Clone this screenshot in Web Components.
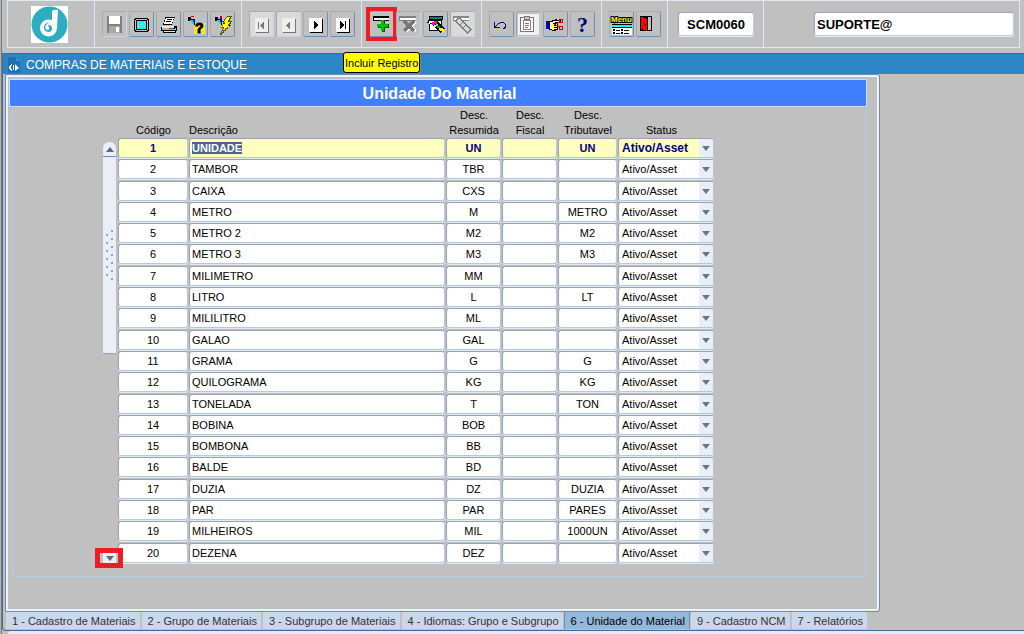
<!DOCTYPE html>
<html lang="pt-BR">
<head>
<meta charset="utf-8">
<title>Compras de Materiais e Estoque</title>
<style>
  html, body { margin: 0; min-height: 100%; }
  body { background: #c0c0c0; color: #000; font: 11px/15px "Liberation Sans", Arial, sans-serif; }
</style>
</head>
<body>
<erp-app></erp-app>

<template id="icons">
  <svg data-icon="save" viewBox="0 0 23 23"><path fill="#808080" d="M3 3h15l1 1v16H4l-1-1z"/><path fill="#fff" d="M6 3h11v8H6z"/><path fill="#a8a8a8" d="M6 13h11v7H6z"/><path fill="#fff" d="M13 14h3v5h-3z"/><path fill="#c0c0c0" d="M3 3h1v16H3z"/></svg>
  <svg data-icon="screen" viewBox="0 0 23 23"><path fill="#000" d="M5 5h13v1h1v12h-1v1H5v-1H4V6h1z"/><path fill="#c0c0c0" d="M6 6h11v1h1v10h-1v1H6v-1H5V7h1z"/><path fill="#000" d="M6 7h11v10H6z"/><path fill="#0ff" d="M7 8h9v8H7z"/><path fill="#fff" d="M8 9h1v1H8zM11 9h1v1h-1zM14 9h1v1h-1zM9 11h1v1H9zM12 11h1v1h-1zM8 13h1v1H8zM11 13h1v1h-1zM14 13h1v1h-1z"/></svg>
  <svg data-icon="print" viewBox="0 0 23 23"><path fill="#000" d="M8 4h10v1h-1v2h-1v3h-1v2H6v-2h1V7h1z"/><path fill="#fff" d="M9 5h8l-2 6H7z"/><path fill="#000" d="M10 6h5v1h-5zM9 8h5v1H9z"/><path fill="#000" d="M5 13h15v5H4v-4h1z"/><path fill="#e8e8e8" d="M5 13h12v2H5z"/><path fill="#b0b0b0" d="M5 15h14v2H5z"/><path fill="#000" d="M6 18h13v2H6z"/><path fill="#e8e8e8" d="M7 18h11v1H7z"/><path fill="#e00" d="M12 15h2v1h-2z"/><path fill="#0b0" d="M14 15h2v1h-2z"/><path fill="#00d" d="M16 15h2v1h-2z"/></svg>
  <svg data-icon="ask" viewBox="0 0 23 23"><path fill="#fff200" d="M10 10h11v11H10z"/><path fill="#c0c0c0" d="M10 10h2v1h-2zM10 13h1v1h-1zM20 13h1v1h-1zM11 17h1v1h-1zM19 18h1v1h-1zM11 20h1v1h-1z"/><path fill="#000" d="M4 4h3v2h4v6h-1v-2H8V9H6V8H4z"/><path fill="#d00" d="M7 3h3v1H7z"/><path fill="#00f" d="M9 6h2v3H9z"/><path fill="#00e0e0" d="M6 7h3v2h1v2H8V9H6z"/><text x="11" y="20" font-family="Liberation Sans" font-size="14" font-weight="700" fill="#000" stroke="#000" stroke-width="1">?</text></svg>
  <svg data-icon="run" viewBox="0 0 23 23"><path fill="#000" d="M4 4h3v2h4v6h-1v-2H8V9H6V8H4z"/><path fill="#d00" d="M9 3h2v2H9z"/><path fill="#00f" d="M9 5h2v4H9z"/><path fill="#00e0e0" d="M6 7h3v2h1v2H8V9H6z"/><path fill="#555500" d="M16 3h5v1h-1v2h-1v2h2v1h-1v2h-1v1h1v1h-1v1h-2v2h-2v2h-2v2h-2v2H9v-2h1v-2h1v-2h1v-1h-2v-1h1v-2h1V9h-1V8h2V6h1V5h1z"/><path fill="#ff0" d="M16 4h3v1h-1v2h-1v2h2v1h-1v1h-1v2h1v1h-2v1h-2v2h-2v2h-1v-1h1v-2h1v-2h-2v-1h1v-2h2V9h-1V8h1V6h1z"/></svg>
  <svg data-icon="first" viewBox="0 0 23 23"><path fill="#777" d="M6 6h13v14H6z"/><path fill="#eee" d="M5 5h13v14H5z"/><path fill="#777" d="M8 9h1v7H8zM14 9v7h-1v-1h-1v-1h-1v-1h-1v-1h1v-1h1v-1h1V9z"/></svg>
  <svg data-icon="prev" viewBox="0 0 23 23"><path fill="#777" d="M6 6h13v14H6z"/><path fill="#eee" d="M5 5h13v14H5z"/><path fill="#777" d="M13 9v7h-1v-1h-1v-1h-1v-1H9v-1h1v-1h1v-1h1V9z"/></svg>
  <svg data-icon="next" viewBox="0 0 23 23"><path fill="#000" d="M6 6h13v14H6z"/><path fill="#fff" d="M5 5h13v14H5z"/><path fill="#000" d="M10 8h1v1h1v1h1v1h1v2h-1v1h-1v1h-1v1h-1z"/></svg>
  <svg data-icon="last" viewBox="0 0 23 23"><path fill="#000" d="M6 6h13v14H6z"/><path fill="#fff" d="M5 5h13v14H5z"/><path fill="#000" d="M9 8h1v1h1v1h1v1h1v2h-1v1h-1v1h-1v1H9zM14 8h1v8h-1z"/></svg>
  <svg data-icon="add" viewBox="0 0 23 23"><path fill="#000" d="M3 3h16v5H3z"/><path fill="#fff" d="M4 5h15v2H4z"/><path fill="#005800" d="M11 7h4v4h4v4h-4v4h-3v-4H8v-3h3z"/><path fill="#00c000" d="M11 7h3v4h4v3h-4v4h-3v-4H7v-3h4z"/></svg>
  <svg data-icon="delete" viewBox="0 0 23 23"><path fill="#808080" d="M2 3h17v5H2z"/><path fill="#fff" d="M3 5h16v2H3z"/><path stroke="#fff" stroke-width="2" d="M9 9l10 9M19 9L9 19"/><path stroke="#777" stroke-width="3" d="M7 8l10 10M17 8L7 18"/></svg>
  <svg data-icon="query" viewBox="0 0 23 23"><path fill="#000" d="M5 3h14v4h-1v11H5v-8H3V9h1V7h1z"/><path fill="#008080" d="M6 4h12v2H6z"/><path fill="#fff" d="M5 8h12v9H6v-6H5z"/><path fill="#000" d="M6 10h3v1H6z"/><path stroke="#000" stroke-width="6" d="M10 9l9 9"/><path fill="#f0f" d="M8 9h3v3H8z"/><path fill="#f22" d="M10 8h3v3h-3z"/><path fill="#ff0" d="M10 12h2v2h-2z"/><path fill="#0ff" d="M12 11h2v2h-2z"/><path fill="#0a0" d="M13 13h3v2h-3z"/><path fill="#ff0" d="M15 15h4v1h1v3h-2v-1h-2v-1h-1z"/></svg>
  <svg data-icon="cancelQuery" viewBox="0 0 23 23"><path fill="#888" d="M2 3h16v5H2z"/><path fill="#fff" d="M3 5h15v2H3z"/><path stroke="#808080" stroke-width="6" d="M6 6l13 13"/><path stroke="#d8d8d8" stroke-width="3" d="M7 7l11 11"/><path stroke="#808080" d="M9 12l3-3M12 15l3-3"/></svg>
  <svg data-icon="undo" viewBox="0 0 23 23"><path fill="#000080" d="M4 9h1v5h5v1H4zM5 13h1v-1h1v-1h1v1H7v1H6v1H5zM8 10h2V9h4v1h1v1h1v4h-1v1h-2v-1h1v-1h1v-3h-1v-1h-4v1H8z"/></svg>
  <svg data-icon="clipboard" viewBox="0 0 23 23"><path fill="#f2f2f2" d="M1 1h21v21H1z"/><path fill="#fff" stroke="#777" d="M3.500 4.500h13v14h-13z"/><path fill="#ccc" stroke="#777" d="M7.500 3.500h5v3h-5z"/><path fill="#fff" stroke="#888" d="M6.500 7.500h7v9h-7z"/><path fill="#777" d="M8 10h4v1H8zM8 12h4v1H8zM8 14h3v1H8z"/></svg>
  <svg data-icon="cut" viewBox="0 0 23 23"><path fill="#00d" d="M2 8h3v8H2z"/><path fill="#000" d="M5 8h3V7h3V6h2v1h4v2h-3v8h-2v1H8v-1H5z"/><path fill="#ffff80" d="M6 9h3V8h7v1h-5v1H9v1h4v1h-3v1h3v1h-3v1h3v1h-3v1H8v-1H6z"/><path stroke="#d00" d="M15.500 6.500h3v3h-3zM15.500 13.500h3v3h-3zM10 11l6 3M10 12l6-3"/></svg>
  <svg data-icon="help" viewBox="0 0 23 23"><text x="6" y="19" font-family="Liberation Serif" font-size="22" font-weight="700" fill="#000080">?</text></svg>
  <svg data-icon="menu" viewBox="0 0 23 23"><path fill="#fff" d="M2 14h20v8H2z"/><path fill="#000" d="M2 11h20v4H2zM3 16h2v2H3zM6 17h4v1H6zM11 16h2v2h-2zM14 17h5v1h-5zM3 19h2v2H3zM6 20h4v1H6zM11 19h2v2h-2zM14 20h5v1h-5z"/><path fill="#0ff" d="M2 12h20v2H2z"/><text x="1" y="9" font-family="Liberation Sans" font-size="8" font-weight="700" fill="#ff0" stroke="#000" stroke-width="2" paint-order="stroke">Menu</text></svg>
  <svg data-icon="exit" viewBox="0 0 23 23"><path fill="#000" d="M3 3h12v15H3z"/><path fill="#c0c0c0" d="M10 4h4v13h-4z"/><path fill="#000" d="M3 3h8v16l-1-1H3z"/><path fill="#f00" d="M4 4l6 2v12l-6-2z"/><path fill="#000" d="M8 11h1v2H8z"/></svg>
</template>

<script>
const iconSource = document.getElementById('icons').content;
const getIcon = name => iconSource.querySelector('[data-icon="' + name + '"]').cloneNode(true);

/* Square toolbar button; the "marked" attribute draws a red frame over it. */
class ToolButton extends HTMLElement {
  connectedCallback() {
    const root = this.attachShadow({ mode: 'open' });
    root.innerHTML = `<style>
      :host { display: block; position: relative; width: 25px; height: 26px; flex: none; }
      button { box-sizing: border-box; display: block; width: 100%; height: 100%; margin: 0; padding: 0;
        background: #c0c0c0; border: 1px solid; border-color: #a8a8a8 #6f8fb2 #6f8fb2 #a8a8a8; border-radius: 2px; }
      :host([soft]) button { border-color: #a8a8a8 #c3d2e6 #c3d2e6 #a8a8a8; }
      :host([pale]) button { background: #dadada; }
      svg { display: block; width: 23px; height: 23px; fill: none; shape-rendering: crispEdges; }
      :host([marked])::after { content: ""; position: absolute; inset: -4px -3px; border: 4px solid #ee1c25; }
    </style><button type="button"></button>`;
    const b = root.querySelector('button');
    b.setAttribute('aria-label', this.getAttribute('label'));
    b.append(getIcon(this.getAttribute('icon')));
  }
}
customElements.define('tool-button', ToolButton);

class ToolGroup extends HTMLElement {
  connectedCallback() {
    this.attachShadow({ mode: 'open' }).innerHTML = `<style>
      :host { display: flex; gap: 2px; padding: 10px 6px 0 7px; border-left: 1px solid #dfe9f4; }
      :host([first]) { padding: 5px 26px 0 23px; border-left-width: 0; }
      :host([code]) { padding: 11px 9px 0 10px; }
      :host([user]) { flex: 1; padding: 11px 5px 0 50px; }
    </style><slot></slot>`;
  }
}
customElements.define('tool-group', ToolGroup);

class ToolField extends HTMLElement {
  connectedCallback() {
    const root = this.attachShadow({ mode: 'open' });
    root.innerHTML = `<style>
      :host { display: block; width: 76px; }
      :host([wide]) { width: auto; flex: 1; }
      input { box-sizing: border-box; width: 100%; height: 24px; margin: 0; padding: 0 2px; background: #fff;
        border: 1px solid; border-color: #9aa7b8 #b9cce4 #b9cce4 #9aa7b8; border-radius: 3px; box-shadow: 0 1px #e6edf6;
        font: 700 13px/20px "Liberation Sans", Arial, sans-serif; color: #000; text-align: center; }
      :host([wide]) input { text-align: left; }
    </style><input>`;
    const i = root.querySelector('input');
    i.value = this.getAttribute('value');
    i.setAttribute('aria-label', this.getAttribute('label'));
  }
}
customElements.define('tool-field', ToolField);

class CompanyLogo extends HTMLElement {
  connectedCallback() {
    this.attachShadow({ mode: 'open' }).innerHTML = `<style>
      :host { display: block; width: 37px; height: 37px; background: #fff; } svg { display: block; }
    </style><svg width="37" height="37" viewBox="0 0 37 37" role="img" aria-label="Logotipo">
      <circle cx="18.500" cy="18.500" r="18" fill="#2fadc0"/>
      <circle cx="17.500" cy="22" r="8.500" fill="#fff"/>
      <path fill="#fff" d="M21 5q3-2 6-1l-1 18-5 2z"/>
      <path fill="#2fadc0" d="M21 10v8q-6-3-8 2-1 5 4 6 5 0 4-5l-2-2h-2q3 5-1 5-3-2-1-5 2-3 6-1V10z"/>
    </svg>`;
  }
}
customElements.define('company-logo', CompanyLogo);

class ToolBar extends HTMLElement {
  connectedCallback() {
    this.attachShadow({ mode: 'open' }).innerHTML = `<style>
      :host { display: flex; height: 46px; margin: 0 4px 5px 7px; border: 1px solid #dfe9f4; }
    </style><slot></slot>`;
  }
}
customElements.define('tool-bar', ToolBar);

class UnitGrid extends HTMLElement {
  connectedCallback() {
    const rows = [
      ['UNIDADE', 'UN', 'UN'], ['TAMBOR', 'TBR', ''], ['CAIXA', 'CXS', ''], ['METRO', 'M', 'METRO'],
      ['METRO 2', 'M2', 'M2'], ['METRO 3', 'M3', 'M3'], ['MILIMETRO', 'MM', ''], ['LITRO', 'L', 'LT'],
      ['MILILITRO', 'ML', ''], ['GALAO', 'GAL', ''], ['GRAMA', 'G', 'G'], ['QUILOGRAMA', 'KG', 'KG'],
      ['TONELADA', 'T', 'TON'], ['BOBINA', 'BOB', ''], ['BOMBONA', 'BB', ''], ['BALDE', 'BD', ''],
      ['DUZIA', 'DZ', 'DUZIA'], ['PAR', 'PAR', 'PARES'], ['MILHEIROS', 'MIL', '1000UN'], ['DEZENA', 'DEZ', '']
    ];
    const cell = (v, label, cls) => `<td><input class="${cls || ''}" value="${v}" aria-label="${label}"></td>`;
    const body = rows.map((r, n) => `<tr${n ? '' : ' class="current"'}>` +
      cell(n + 1, 'Código') + cell(r[0], 'Descrição', 'left') + cell(r[1], 'Desc. Resumida') +
      cell('', 'Desc. Fiscal') + cell(r[2], 'Desc. Tributavel') +
      `<td><div class="pick"><select aria-label="Status"><option>Ativo/Asset</option><option>Inativo</option></select></div></td></tr>`).join('');
    const root = this.attachShadow({ mode: 'open' });
    root.innerHTML = `<style>
      :host { display: flex; gap: 2px; }
      .scroll { display: flex; flex-direction: column; width: 13px; margin-top: 34px; }
      .scroll button { display: grid; place-items: center; width: 13px; padding: 0; margin: 0; border: 0; background: #e9eef7; }
      .scroll .up { height: 14px; border-radius: 6px 6px 0 0; }
      .thumb { height: 196px; border-top: 1px solid #7488a8; border-bottom: 1px solid #8ca4c6; background: #e9eef7;
        display: grid; place-items: center; }
      .thumb::before { content: ""; width: 10px; height: 52px;
        background: radial-gradient(circle at 2px 6px, #8aa5c8 1px, transparent 1px) 0 0 / 10px 8px,
          radial-gradient(circle at 7px 2px, #8aa5c8 1px, transparent 1px) 0 0 / 10px 8px; }
      .down { position: relative; height: 10px; margin: auto 0 1px; }
      .scroll .down button { height: 10px; }
      .down::after { content: ""; position: absolute; inset: -5px -7px -5px -8px; border: 5px solid #ee1c25; }
      .arrow { width: 0; height: 0; border: 4px solid transparent; }
      .up .arrow { border-top: 0; border-bottom: 5px solid #5d6680; }
      .down .arrow { border-bottom: 0; border-top: 5px solid #5d6680; }
      table { flex: 1; height: 456px; border-collapse: collapse; table-layout: fixed; width: 100%; }
      th { height: 30px; padding: 0; font-weight: 400; line-height: 15px; vertical-align: bottom; }
      th.left { text-align: left; }
      th:last-child { padding-right: 10px; }
      .c1 { width: 71px; } .c3 { width: 56px; } .c4 { width: 56px; } .c5 { width: 60px; } .c6 { width: 97px; }
      td { padding: 0 1px 0 0; vertical-align: top; }
      input, .pick { box-sizing: border-box; display: block; width: 100%; height: 20px; margin: 0; padding: 0 2px; background: #fff;
        border: 1px solid; border-color: #9ba3ad #b4c8e2 #b4c8e2 #9ba3ad; border-radius: 3px; box-shadow: 0 1px #e2eaf5;
        font: inherit; color: inherit; text-align: center; outline: 0; }
      input.left { text-align: left; }
      input::selection { background: #4a648f; color: #fff; }
      .pick { position: relative; padding: 0; overflow: hidden; }
      select { appearance: none; box-sizing: border-box; width: 100%; height: 18px; margin: 0; padding: 1px 14px 0 3px; border: 0;
        background: linear-gradient(#e9eef7, #e9eef7) right / 14px 18px no-repeat; font: inherit; color: inherit; display: block; }
      .pick::after { content: ""; position: absolute; right: 3px; top: 7px; border: 4px solid transparent; border-bottom: 0;
        border-top: 5px solid #6b7488; pointer-events: none; }
      .current { font-weight: 700; color: #000080; }
      .current input, .current .pick { background: #ffffbf; }
      .current select { font-size: 12px; }
    </style>
    <div class="scroll">
      <button class="up" type="button" aria-label="Rolar para cima"><span class="arrow"></span></button>
      <div class="thumb"></div>
      <div class="down"><button type="button" aria-label="Rolar para baixo"><span class="arrow"></span></button></div>
    </div>
    <table>
      <colgroup><col class="c1"><col><col class="c3"><col class="c4"><col class="c5"><col class="c6"></colgroup>
      <thead><tr><th>Código</th><th class="left">Descrição</th><th>Desc.<br>Resumida</th><th>Desc.<br>Fiscal</th><th>Desc.<br>Tributavel</th><th>Status</th></tr></thead>
      <tbody>${body}</tbody>
    </table>`;
    const first = root.querySelector('input.left');
    first.focus({ preventScroll: true });
    first.select();
  }
}
customElements.define('unit-grid', UnitGrid);

class FormPanel extends HTMLElement {
  connectedCallback() {
    this.attachShadow({ mode: 'open' }).innerHTML = `<style>
      :host { display: block; box-sizing: border-box; width: 100%; max-width: 875px; border: 1px solid #6d8cae; border-radius: 0 3px 3px 0;
        box-shadow: inset 0 0 0 2px #edf2f8; padding: 4px 12px 34px 3px; }
      h1 { box-sizing: border-box; height: 28px; margin: 0; padding: 1px 0 0 3px; border: 1px solid #d3e0f0; outline: 1px solid #aebfd4;
        background: #4080ff; color: #fff; font: 700 16px/26px "Liberation Sans", Arial, sans-serif; text-align: center; }
      .canvas { margin-left: 3px; padding: 1px 151px 12px 90px; border: 1px solid #b7cae3; border-top: 0; border-radius: 4px; }
    </style><h1>${this.getAttribute('heading')}</h1><div class="canvas"><slot></slot></div>`;
  }
}
customElements.define('form-panel', FormPanel);

class TabStrip extends HTMLElement {
  connectedCallback() {
    const active = this.getAttribute('active');
    const tabs = this.getAttribute('tabs').split('|');
    this.attachShadow({ mode: 'open' }).innerHTML = `<style>
      :host { display: flex; gap: 2px; padding: 0 0 1px 1px; }
      button { height: 17px; margin: 0; padding: 2px 4px 0 6px; border: 0; background: #cad8ec; color: #333;
        font: 11px/15px "Liberation Sans", Arial, sans-serif; white-space: nowrap; }
      button[aria-selected=true] { background: #93b8da; color: #000; box-shadow: 1px 0 #6d8cae, -1px 0 #6d8cae; }
    </style>${tabs.map(t => `<button type="button" role="tab" aria-selected="${t === active}">${t}</button>`).join('')}`;
    this.setAttribute('role', 'tablist');
  }
}
customElements.define('tab-strip', TabStrip);

class MdiWindow extends HTMLElement {
  connectedCallback() {
    this.attachShadow({ mode: 'open' }).innerHTML = `<style>
      :host { display: block; margin-left: 2px; border-left: 1px solid #4a6994; border-bottom: 1px solid #4a6994; border-bottom-left-radius: 4px; }
      header { box-sizing: border-box; display: flex; align-items: center; gap: 6px; height: 21px; padding: 2px 0 0 5px;
        border-top: 1px solid #45689a; background: #2c85c4; color: #fff; font-size: 12px; }
      .content { padding-left: 2px; }
      svg { display: block; }
    </style>
    <header><svg width="12" height="16" viewBox="0 0 12 16"><path fill="#1f70b0" d="M0 0h7l5 5v11H0z"/><path fill="#3f93d0" d="M8 1l3 3H8z"/><path fill="#fff" d="M4 7v2H3v3h1v2H3v-1H2v-1H1V9h1V8h1V7zM5 8h1v5H5zM7 7l4 4-4 3z"/></svg><span>${this.getAttribute('caption')}</span></header>
    <div class="content"><slot></slot></div>`;
  }
}
customElements.define('mdi-window', MdiWindow);

/* Yellow balloon shown under the toolbar button it describes. */
class HintBalloon extends HTMLElement {
  connectedCallback() {
    this.attachShadow({ mode: 'open' }).innerHTML = `<style>
      :host { position: absolute; z-index: 2; left: 343px; top: 52px; box-sizing: border-box; height: 21px; padding: 0 1px; border: 1px solid #000;
        border-radius: 3px; background: #ff0; font-size: 11px; line-height: 20px; white-space: nowrap; box-shadow: 1px 1px #7d8794; }
    </style><slot></slot>`;
    this.setAttribute('role', 'tooltip');
  }
}
customElements.define('hint-balloon', HintBalloon);

class ErpApp extends HTMLElement {
  connectedCallback() {
    const group = list => '<tool-group>' + list.map(([i, l, f]) => `<tool-button icon="${i}" label="${l}" ${f || ''}></tool-button>`).join('') + '</tool-group>';
    this.attachShadow({ mode: 'open' }).innerHTML = `<style>
      :host { display: block; position: relative; overflow: hidden; background: linear-gradient(90deg, #b4b4b4 1px, #707880 1px, #707880 2px, #c0c0c0 2px); }
      footer { height: 3px; margin-left: 8px; border-radius: 4px 0 0; background: #e4ebf5; }
    </style>
    <tool-bar>
      <tool-group first><company-logo></company-logo></tool-group>
      ${group([['save', 'Salvar', 'soft'], ['screen', 'Tela'], ['print', 'Imprimir'], ['ask', 'Entrar consulta'], ['run', 'Executar consulta']])}
      ${group([['first', 'Primeiro', 'soft pale'], ['prev', 'Anterior', 'soft pale'], ['next', 'Próximo'], ['last', 'Último']])}
      ${group([['add', 'Incluir Registro', 'marked'], ['delete', 'Excluir registro', 'soft'], ['query', 'Pesquisar'], ['cancelQuery', 'Limpar', 'soft pale']])}
      ${group([['undo', 'Desfazer'], ['clipboard', 'Colar', 'soft'], ['cut', 'Recortar'], ['help', 'Ajuda']])}
      ${group([['menu', 'Menu'], ['exit', 'Sair']])}
      <tool-group code><tool-field value="SCM0060" label="Programa"></tool-field></tool-group>
      <tool-group user><tool-field wide value="SUPORTE@" label="Usuário"></tool-field></tool-group>
    </tool-bar>
    <hint-balloon>Incluir Registro</hint-balloon>
    <mdi-window caption="COMPRAS DE MATERIAIS E ESTOQUE">
      <form-panel heading="Unidade Do Material"><unit-grid></unit-grid></form-panel>
      <tab-strip active="6 - Unidade do Material" tabs="1 - Cadastro de Materiais|2 - Grupo de Materiais|3 - Subgrupo de Materiais|4 - Idiomas: Grupo e Subgrupo|6 - Unidade do Material|9 - Cadastro NCM|7 - Relatórios"></tab-strip>
    </mdi-window>
    <footer></footer>`;
  }
}
customElements.define('erp-app', ErpApp);
</script>
</body>
</html>
